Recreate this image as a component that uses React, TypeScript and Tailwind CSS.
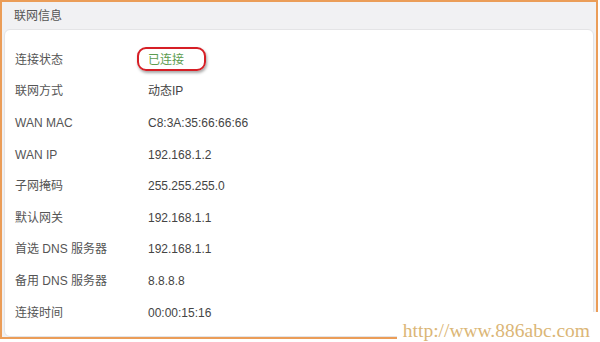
import React from "react";

const rows = [
  { label: "联网方式", value: "动态IP" },
  { label: "WAN MAC", value: "C8:3A:35:66:66:66" },
  { label: "WAN IP", value: "192.168.1.2" },
  { label: "子网掩码", value: "255.255.255.0" },
  { label: "默认网关", value: "192.168.1.1" },
  { label: "首选 DNS 服务器", value: "192.168.1.1" },
  { label: "备用 DNS 服务器", value: "8.8.8.8" },
  { label: "连接时间", value: "00:00:15:16" },
];

const font = { fontFamily: '"Liberation Sans", "Noto Sans CJK SC", sans-serif' };

export default function App() {
  return (
    <div className="relative w-[600px] h-[342px] bg-white overflow-hidden" style={font}>
      <div className="w-[598px] h-[339px] border-2 border-[#eb9d58] flex flex-col bg-[#f1f1f3]">
        <div className="h-[27px] flex items-center pl-[12px] text-[12px] text-[#555]">联网信息</div>
        <div className="flex-1 mx-[2px] bg-white border border-[#e4e4e6] rounded-[6px] pt-[14px]">
          <div className="h-[31.6px] flex items-center text-[12px]">
            <div className="w-[143px] pl-[10px] text-[#555]">连接状态</div>
            <div className="relative">
              <span className="text-[#5c9c4f]">已连接</span>
              <div className="absolute left-[-11px] top-[-4px] w-[69px] h-[24px] border-[2.5px] border-[#d61f26] rounded-[9px] shadow-[1px_2px_3px_rgba(0,0,0,0.35)]" />
            </div>
          </div>
          {rows.map((r) => (
            <div key={r.label} className="h-[31.6px] flex items-center text-[12px]">
              <div className="w-[143px] pl-[10px] text-[#555]">{r.label}</div>
              <div className="text-[#444]">{r.value}</div>
            </div>
          ))}
        </div>
      </div>
      <div className="absolute right-0 bottom-0 w-[203px] h-[30px] bg-white flex items-end justify-end pr-[10px] pb-[2px]">
        <span
          className="text-[19.5px] leading-none text-[#dbb676]"
          style={{ fontFamily: '"Liberation Serif", serif' }}
        >
          http://www.886abc.com
        </span>
      </div>
    </div>
  );
}
